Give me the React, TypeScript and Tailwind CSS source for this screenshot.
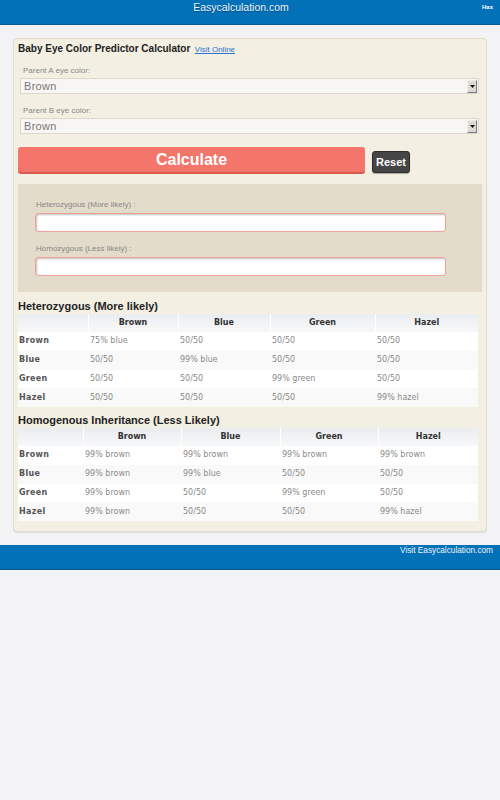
import React from 'react'

const arial = { fontFamily: '"Liberation Sans", Arial, sans-serif' }
const dejavu = { fontFamily: '"DejaVu Sans", Verdana, sans-serif' }

const colors = ['Brown', 'Blue', 'Green', 'Hazel']

const hetero = [
  ['75% blue', '50/50', '50/50', '50/50'],
  ['50/50', '99% blue', '50/50', '50/50'],
  ['50/50', '50/50', '99% green', '50/50'],
  ['50/50', '50/50', '50/50', '99% hazel'],
]

const homo = [
  ['99% brown', '99% brown', '99% brown', '99% brown'],
  ['99% brown', '99% blue', '50/50', '50/50'],
  ['99% brown', '50/50', '99% green', '50/50'],
  ['99% brown', '50/50', '50/50', '99% hazel'],
]

function FakeSelect({ label, top }: { label: string; top: string }) {
  return (
    <div className={`ml-[6px] mr-[7px] ${top}`}>
      <div className="h-[10px] pl-[3px] text-[8px] leading-[10px] text-[#888]" style={arial}>
        {label}
      </div>
      <div className="mt-[2px] flex h-[16px] items-center border border-[#dcd8cf] bg-[#f7f6f3] pl-[3px] pr-[1px]">
        <span className="flex-1 text-[11px] leading-[14px] tracking-[0.3px] text-[#777]" style={arial}>
          Brown
        </span>
        <span className="flex h-[13px] w-[10px] items-center justify-center border border-b-[#777] border-l-[#eee] border-r-[#777] border-t-[#eee] bg-[#dcdad4]">
          <svg width="5" height="3" viewBox="0 0 5 3">
            <path d="M0 0h5L2.5 3z" fill="#111" />
          </svg>
        </span>
      </div>
    </div>
  )
}

function Grid({ widths, rows }: { widths: number[]; rows: string[][] }) {
  return (
    <table className="ml-[4px] w-[460px] table-fixed border-collapse" style={dejavu}>
      <colgroup>
        {widths.map((w, i) => (
          <col key={i} style={{ width: w }} />
        ))}
      </colgroup>
      <thead>
        <tr className="h-[18px] bg-gradient-to-b from-[#eaedf0] to-[#f7f8f9]">
          <th className="border-r border-white" />
          {colors.map((c, i) => (
            <th key={c} className={`text-center text-[8px] font-bold text-[#333] ${i < 3 ? 'border-r border-white' : ''}`}>
              {c}
            </th>
          ))}
        </tr>
      </thead>
      <tbody>
        {rows.map((r, i) => (
          <tr key={i} className={`h-[18.75px] ${i % 2 === 0 ? 'bg-white' : 'bg-[#f9f9f9]'}`}>
            <td className="pl-[1px] text-[8px] font-bold tracking-[0.3px] text-[#555]">{colors[i]}</td>
            {r.map((v, j) => (
              <td key={j} className="pl-[2px] text-[8px] text-[#8a8a8a]">
                {v}
              </td>
            ))}
          </tr>
        ))}
      </tbody>
    </table>
  )
}

export default function App() {
  return (
    <div className="min-h-screen bg-[#f3f2f5]" style={arial}>
      {/* header bar */}
      <div className="relative flex h-[25px] justify-center border-b border-[#0a5a90] bg-[#0371b8] pr-[18px]">
        <span className="pt-[1px] text-[10.5px] leading-[12px] text-[#eef3f8] [text-shadow:0_1px_1px_rgba(0,0,0,0.3)]">
          Easycalculation.com
        </span>
        <span className="absolute right-[7px] top-[3px] text-[6px] font-bold leading-[8px] text-white">Hax</span>
      </div>

      {/* calculator card */}
      <div className="mx-[13px] mt-[13px] rounded-[4px] border border-[#e4dccb] bg-[#f3efe3] pb-[10px] pt-[1px] shadow-[0_1px_1px_rgba(0,0,0,0.08)]">
        <div className="pl-[4px] leading-[14px]">
          <span className="text-[10px] font-bold text-[#222]">Baby Eye Color Predictor Calculator</span>{' '}
          <a className="text-[8px] text-[#2f74d0] underline">Visit Online</a>
        </div>

        <FakeSelect label="Parent A eye color:" top="mt-[9px]" />
        <FakeSelect label="Parent B eye color:" top="mt-[12px]" />

        <div className="mt-[13px] flex items-start pl-[4px]">
          <button className="flex h-[27px] w-[347px] items-center justify-center rounded-[3px] border-b-2 border-[#d9594e] bg-[#f4756a] text-[16px] font-bold text-white">
            Calculate
          </button>
          <button className="ml-[7px] mt-[4px] flex h-[22px] w-[38px] items-center justify-center rounded-[3px] border border-[#2e2e2e] bg-[#454545] text-[11px] font-bold text-white shadow-[0_1px_1px_rgba(0,0,0,0.3)]">
            Reset
          </button>
        </div>

        <div className="mx-[4px] mt-[10px] bg-[#e3dcca] pb-[16px] pl-[17px] pt-[16px]">
          <div className="pl-[1px] text-[8px] leading-[10px] text-[#888]">Heterozygous (More likely) :</div>
          <div className="mt-[3px] h-[19px] w-[411px] rounded-[3px] border border-[#f1a298] bg-white shadow-[inset_1px_1px_2px_rgba(0,0,0,0.25)]" />
          <div className="mt-[12px] pl-[1px] text-[8px] leading-[10px] text-[#888]">Homozygous (Less likely) :</div>
          <div className="mt-[3px] h-[19px] w-[411px] rounded-[3px] border border-[#f1a298] bg-white shadow-[inset_1px_1px_2px_rgba(0,0,0,0.25)]" />
        </div>

        <div className="mt-[7px] pl-[4px] text-[11px] font-bold leading-[15px] text-[#222]">Heterozygous (More likely)</div>
        <Grid widths={[70, 90, 92, 105, 103]} rows={hetero} />

        <div className="mt-[6px] pl-[4px] text-[11px] font-bold leading-[15px] text-[#222]">Homogenous Inheritance (Less Likely)</div>
        <Grid widths={[65, 98, 99, 98, 100]} rows={homo} />
      </div>

      {/* footer bar */}
      <div className="mt-[13px] flex h-[25px] justify-end border-b border-[#0a5a90] bg-[#0371b8] pr-[7px]">
        <span className="pt-[1px] text-[8.25px] leading-[10px] text-[#eef3f8]">Visit Easycalculation.com</span>
      </div>
    </div>
  )
}
